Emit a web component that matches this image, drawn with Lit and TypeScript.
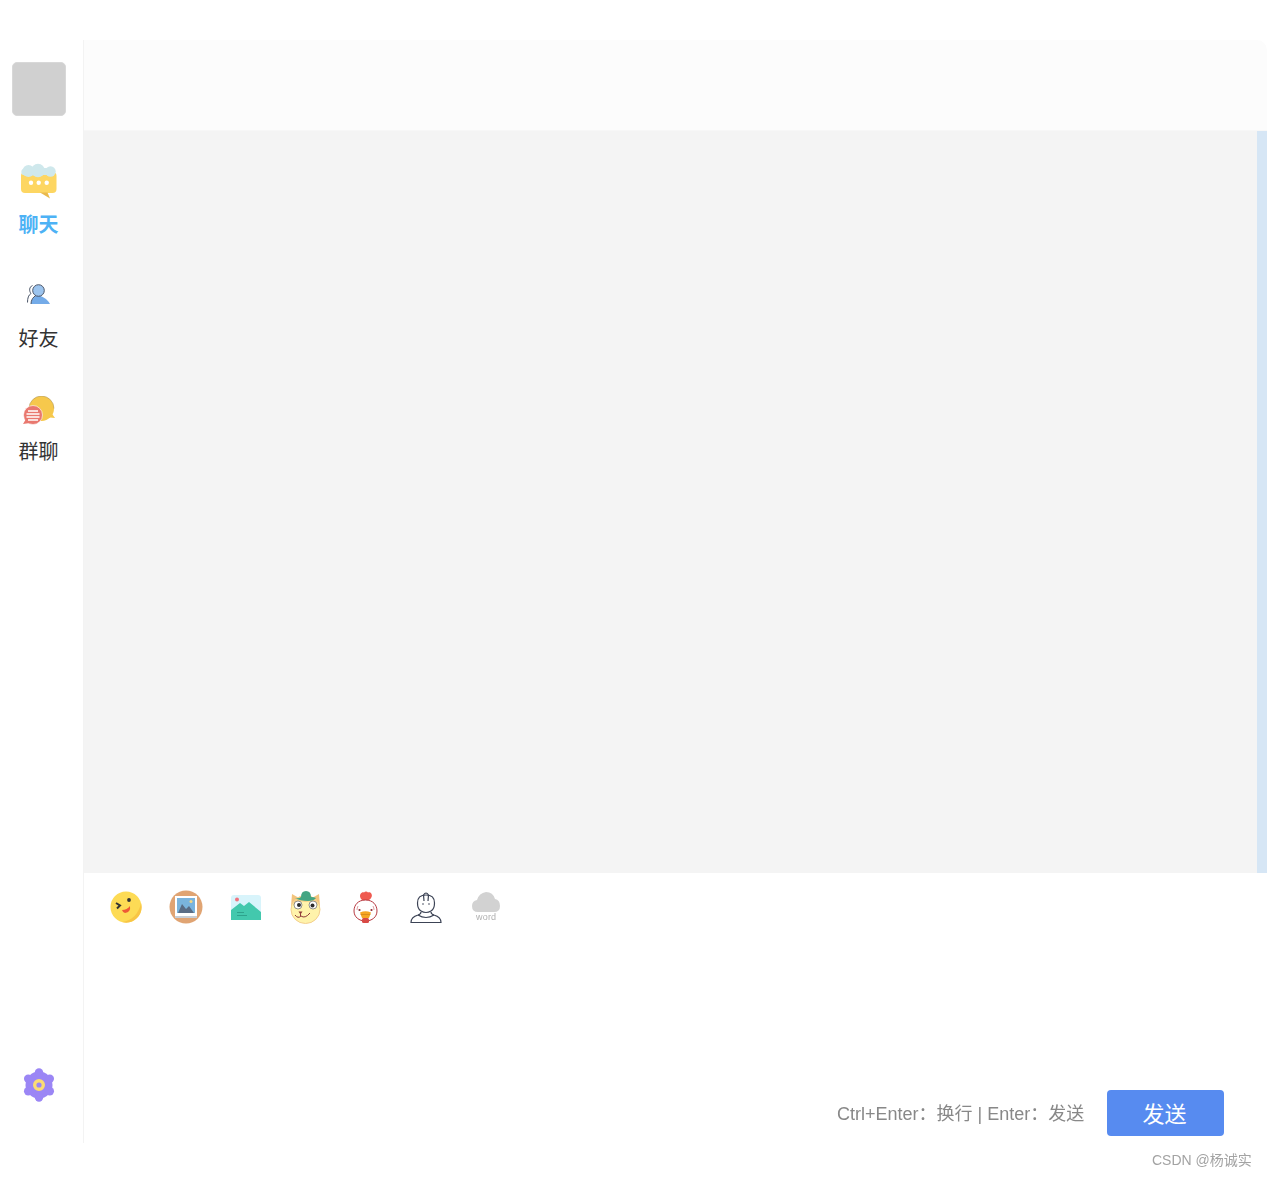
import { LitElement, html, css, svg } from "lit";
import { customElement } from "lit/decorators.js";

const chat = svg`<svg width="36" height="36" viewBox="0 0 36 36">
<rect x="0" y="9" width="35.500" height="21" rx="4" fill="#fdd662"/>
<path d="M19 29.500l10 6-2.500-6z" fill="#e9b94c"/>
<g fill="#cfe8ec"><circle cx="7.500" cy="8" r="6"/><circle cx="17" cy="7.500" r="6.800"/><circle cx="29.500" cy="8.500" r="5.200"/><circle cx="3.500" cy="9" r="3.200"/><rect x="20" y="5" width="8" height="7"/></g>
<circle cx="10" cy="19.700" r="2.200" fill="#fff"/><circle cx="17.700" cy="19.700" r="2.200" fill="#fff"/><circle cx="25.700" cy="19.700" r="2.200" fill="#fff"/></svg>`;

const friend = svg`<svg width="24" height="21" viewBox="0 0 24 21">
<path d="M4 20c0-5 4-8 7-8.500 4 .5 9 3 12 8.500z" fill="#74abe8"/>
<circle cx="11.500" cy="6.500" r="5.800" fill="#9cc4ee" stroke="#4a5568" stroke-width="1"/>
<path d="M4 20c0-4 2-7 5-8.500" fill="none" stroke="#4a5568" stroke-width="1"/>
<path d="M5.500 1.500C2 3 2 7 4 9.500 1.500 11 .500 14 .500 18.500" fill="none" stroke="#4a5568" stroke-width="1"/></svg>`;

const group = svg`<svg class="low" width="32" height="29" viewBox="0 0 32 29">
<circle cx="18.500" cy="12.500" r="12.500" fill="#f6c84c"/>
<path d="M27 15l5 7-10-1z" fill="#f6c84c"/>
<path d="M31 12.500A12.500 12.500 0 0 0 6 12.500" fill="none" stroke="#8a7a50" stroke-width=".4"/>
<circle cx="10" cy="19" r="9.500" fill="#e9786f" stroke="#fff" stroke-width=".6"/>
<path d="M0 28l3-5 4 4z" fill="#e9786f"/>
<path d="M5 15h10M3.500 18h13M3.500 21h13M5 24h10" stroke="#fff" stroke-width="1.500"/></svg>`;

const gearLobes = [-90, -30, 30, 90, 150, 210].map((a) => {
  const r = (a * Math.PI) / 180;
  return svg`<circle cx=${16 + 12.5 * Math.cos(r)} cy=${17 + 12.5 * Math.sin(r)} r="4.200"/>`;
});
const gear = svg`<svg width="32" height="34" viewBox="0 0 32 34">
<g fill="#9b86f5"><circle cx="16" cy="17" r="13.500"/>${gearLobes}</g>
<circle cx="16" cy="17" r="4.300" fill="none" stroke="#fbdc73" stroke-width="3.400"/></svg>`;

const kiss = svg`<svg width="32" height="32" viewBox="0 0 32 32">
<circle cx="16" cy="16" r="15.500" fill="#fddb55"/>
<path d="M31 12a15.500 15.500 0 0 1-19 19c10-1 17-9 19-19z" fill="#f8c545"/>
<path d="M6 12l4 2.500-3 3" fill="none" stroke="#333" stroke-width="2"/>
<circle cx="19" cy="9" r="1.900" fill="#333"/>
<path d="M12 19Q17 19 20 15 21 21 15 22 13 22 12 19z" fill="#ee5a36"/></svg>`;

const photo = svg`<svg width="34" height="34" viewBox="0 0 34 34">
<circle cx="17" cy="17" r="16.500" fill="#e0a473"/>
<rect x="6" y="6" width="22" height="22" fill="#fff"/>
<rect x="8" y="8" width="18" height="15" fill="#7ab4dd"/>
<path d="M9 23l4-9 4 5 3-3 5 7z" fill="#5a6c85"/>
<circle cx="22" cy="11.500" r="1.500" fill="#f3d683"/>
<rect x="6" y="26" width="22" height="2" fill="#c9ced6"/></svg>`;

const landscape = svg`<svg width="30" height="25" viewBox="0 0 30 25">
<rect width="30" height="25" rx="3" fill="#d8f4fb"/>
<path d="M0 22V15l9-7 4 3 5-4 12 10v9q0 3-3 3H3q-3 0-3-3z" fill="#43c8ad"/>
<circle cx="6" cy="4.500" r="2" fill="#f0737e"/>
<path d="M6 17.500h7M6 20.500h10" stroke="#2ea28c" stroke-width="1"/></svg>`;

const dog = svg`<svg class="left" width="31" height="34" viewBox="0 0 31 34">
<path d="M1 16L2 4l7 4h13l7-4 1 12z" fill="#f3c47d"/>
<ellipse cx="15.500" cy="19.500" rx="14.500" ry="14" fill="#fff3ab" stroke="#f3cf8e"/>
<path d="M3 15q1-7 6-8h13q5 1 6 8-6-5-12-3-7-2-13 3z" fill="#f6cf86"/>
<path d="M5 8q4 1 6-1 0-6 5-6 5 0 5 6 3 0 5 1-2 3-8 3-8 0-13-3z" fill="#43a583"/>
<circle cx="8" cy="15" r="4" fill="#fff" stroke="#666" stroke-width=".7"/><circle cx="23" cy="15" r="4" fill="#fff" stroke="#666" stroke-width=".7"/>
<circle cx="9" cy="15" r="2" fill="#2d2d2d"/><circle cx="22.500" cy="15.500" r="2" fill="#2d2d2d"/>
<path d="M8.500 21.500h4l-2 3z" fill="#8f3a3a"/>
<path d="M10.500 24v2M5 25q3 4 6 1 4 3 9-3" fill="none" stroke="#8f3a3a"/></svg>`;

const rooster = svg`<svg width="26" height="33" viewBox="0 0 26 33">
<path d="M12.500 11C8 9 6 6 7.500 3c1-2 3-2 3.500-1.500C12 0 14 0 15 1.500c1-.5 3-.5 3.500 1.500 1.500 3-1.500 6-6 8z" fill="#ef5a50"/>
<path d="M12.500 9C5 9 1 14 1 20c0 6 5 10 11.500 10S24 26 24 20c0-6-4-11-11.500-11z" fill="#fff" stroke="#b83a42" stroke-width="1"/>
<path d="M5 15q-1 2-1 4M20 15q1 2 1 4" fill="none" stroke="#d9878c" stroke-width=".8"/>
<circle cx="6.500" cy="19" r="1.100" fill="#8b2b33"/><circle cx="18.500" cy="19" r="1.100" fill="#8b2b33"/>
<path d="M7 21.500q5.500-2.500 11 0l-2 5.500H9z" fill="#f5a623"/>
<path d="M7.500 23.500h10" stroke="#c97a14" stroke-width=".6"/>
<rect x="9" y="27" width="7" height="5" rx="1.500" fill="#d94a45"/></svg>`;

const man = svg`<svg width="32" height="31" viewBox="0 0 32 31" fill="none" stroke="#3c4355" stroke-width="1.200">
<path d="M7.500 11q0-8 8.500-8 8.500 0 8.500 8 0 6-3.500 8-5 3-10 0-3.500-2-3.500-8z"/>
<path d="M14 9L13.500 3Q16-1 18.500 3L18 9"/>
<path d="M11 20q0 2-3 3-7 2-7 7.500h30q0-5.500-7-7.500-3-1-3-3"/>
<path d="M8 23q8 5 16 0"/>
<circle cx="13" cy="12" r=".8" fill="#3c4355" stroke="none"/><circle cx="19" cy="12" r=".8" fill="#3c4355" stroke="none"/></svg>`;

const cloud = svg`<svg width="28" height="20" viewBox="0 0 28 20">
<path d="M6 20q-6 0-6-6 0-5 5-6 2-7 9-8 7 0 9 7 5 1 5 7t-6 6z" fill="#d2d2d2"/></svg>`;

@customElement("app-root")
export class AppRoot extends LitElement {
  static styles = css`
    :host {
      display: block;
      height: 1177px;
      padding-top: 40px;
      box-sizing: border-box;
      background: #fff;
      font-family: "Liberation Sans", "Noto Sans CJK SC", sans-serif;
      position: relative;
      overflow: hidden;
    }
    .shell { display: flex; height: 1103px; }
    .side {
      width: 83px; flex: none; display: flex; flex-direction: column; align-items: center;
      padding: 22px 5px 41px 0; box-sizing: border-box;
    }
    .avatar { width: 54px; height: 54px; box-sizing: border-box; border: 1px solid #d8d8d8; border-radius: 5px; background: #d0d0d0; flex: none; margin-bottom: 42px; }
    .nav {
      display: flex; flex-direction: column; align-items: center; height: 113.5px; flex: none; width: 100%;
      padding-right: 1px; box-sizing: border-box;
      font-size: 20px; line-height: 26px; color: #333;
    }
    .nav .slot { height: 54px; padding-bottom: 9px; box-sizing: border-box; display: flex; align-items: center; justify-content: center; }
    .nav .low { margin-top: 5px; }
    .nav.on { color: #4db2f5; font-weight: 700; }
    .spacer { flex: 1; }
    .main { flex: 1; min-width: 0; display: flex; flex-direction: column; border-left: 1px solid #f3f3f3; }
    .head { height: 91px; flex: none; background: #fcfcfc; border-radius: 0 10px 0 0; border-bottom: 1px solid #f7f7f7; box-sizing: border-box; }
    .msgs { height: 742px; flex: none; background: #f4f4f4; display: flex; justify-content: flex-end; }
    .bar { width: 10px; background: #d6e6f5; }
    .tools { display: flex; padding: 17px 0 0 12px; height: 46px; flex: none; }
    .tool { width: 60px; height: 34px; display: flex; flex-direction: column; align-items: center; justify-content: center; flex: none; }
    .tool .left { margin-right: 1px; }
    .file { justify-content: flex-start; padding-top: 2px; box-sizing: border-box; }
    .word { font-size: 9px; line-height: 10px; color: #b0b0b0; letter-spacing: .2px; will-change: transform; }
    .grow { flex: 1; }
    .foot { display: flex; align-items: center; justify-content: flex-end; padding: 0 43px 7px 0; }
    .hint { font-size: 18px; color: #888; margin-right: 23px; padding-bottom: 2px; will-change: transform; }
    .send {
      width: 117px; height: 46px; border: 0; border-radius: 4px; background: #578bf0; color: #fff;
      font: inherit; font-size: 22px; padding: 0 2px 3px 0;
    }
    .mark { position: absolute; right: 15px; bottom: 8px; font-size: 14px; line-height: 18px; color: #a3a3a3; will-change: transform; }
  `;
  render() {
    return html`
      <div class="shell">
        <aside class="side">
          <div class="avatar"></div>
          <div class="nav on"><div class="slot">${chat}</div><span>聊天</span></div>
          <div class="nav"><div class="slot">${friend}</div><span>好友</span></div>
          <div class="nav"><div class="slot">${group}</div><span>群聊</span></div>
          <div class="spacer"></div>
          ${gear}
        </aside>
        <section class="main">
          <div class="head"></div>
          <div class="msgs"><div class="bar"></div></div>
          <div class="tools">
            <div class="tool">${kiss}</div>
            <div class="tool">${photo}</div>
            <div class="tool">${landscape}</div>
            <div class="tool">${dog}</div>
            <div class="tool">${rooster}</div>
            <div class="tool">${man}</div>
            <div class="tool file">${cloud}<span class="word">word</span></div>
          </div>
          <div class="grow"></div>
          <div class="foot">
            <span class="hint">Ctrl+Enter：换行 | Enter：发送</span>
            <button class="send">发送</button>
          </div>
        </section>
      </div>
      <div class="mark">CSDN @杨诚实</div>
    `;
  }
}
